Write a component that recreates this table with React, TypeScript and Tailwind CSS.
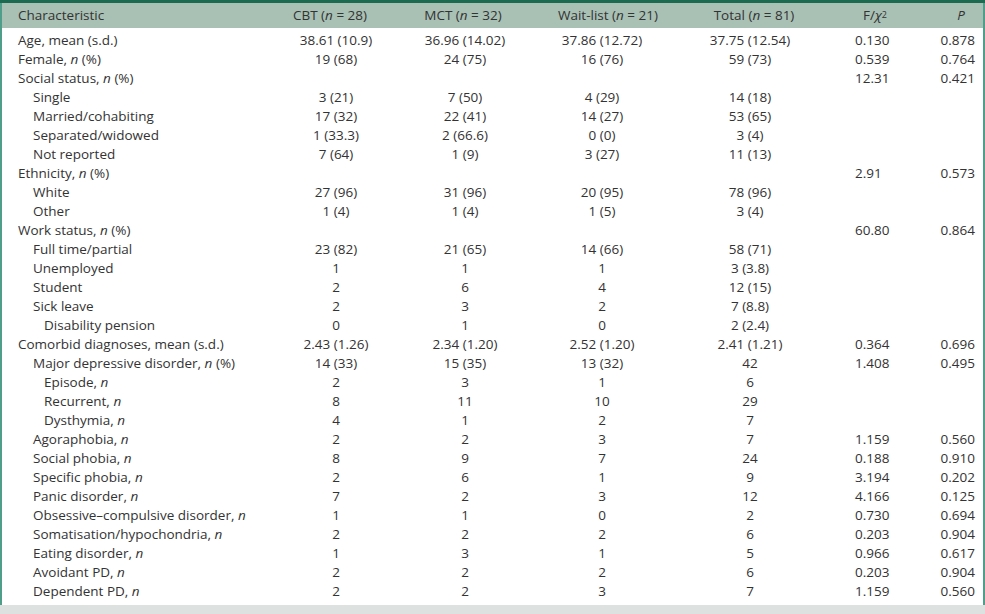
type Row = {
  label: string;
  level: 0 | 1 | 2;
  cbt?: string;
  mct?: string;
  wait?: string;
  total?: string;
  f?: string;
  p?: string;
};

const rows: Row[] = [
  { label: "Age, mean (s.d.)", level: 0, cbt: "38.61 (10.9)", mct: "36.96 (14.02)", wait: "37.86 (12.72)", total: "37.75 (12.54)", f: "0.130", p: "0.878" },
  { label: "Female, {n} (%)", level: 0, cbt: "19 (68)", mct: "24 (75)", wait: "16 (76)", total: "59 (73)", f: "0.539", p: "0.764" },
  { label: "Social status, {n} (%)", level: 0, f: "12.31", p: "0.421" },
  { label: "Single", level: 1, cbt: "3 (21)", mct: "7 (50)", wait: "4 (29)", total: "14 (18)" },
  { label: "Married/cohabiting", level: 1, cbt: "17 (32)", mct: "22 (41)", wait: "14 (27)", total: "53 (65)" },
  { label: "Separated/widowed", level: 1, cbt: "1 (33.3)", mct: "2 (66.6)", wait: "0 (0)", total: "3 (4)" },
  { label: "Not reported", level: 1, cbt: "7 (64)", mct: "1 (9)", wait: "3 (27)", total: "11 (13)" },
  { label: "Ethnicity, {n} (%)", level: 0, f: "2.91", p: "0.573" },
  { label: "White", level: 1, cbt: "27 (96)", mct: "31 (96)", wait: "20 (95)", total: "78 (96)" },
  { label: "Other", level: 1, cbt: "1 (4)", mct: "1 (4)", wait: "1 (5)", total: "3 (4)" },
  { label: "Work status, {n} (%)", level: 0, f: "60.80", p: "0.864" },
  { label: "Full time/partial", level: 1, cbt: "23 (82)", mct: "21 (65)", wait: "14 (66)", total: "58 (71)" },
  { label: "Unemployed", level: 1, cbt: "1", mct: "1", wait: "1", total: "3 (3.8)" },
  { label: "Student", level: 1, cbt: "2", mct: "6", wait: "4", total: "12 (15)" },
  { label: "Sick leave", level: 1, cbt: "2", mct: "3", wait: "2", total: "7 (8.8)" },
  { label: "Disability pension", level: 2, cbt: "0", mct: "1", wait: "0", total: "2 (2.4)" },
  { label: "Comorbid diagnoses, mean (s.d.)", level: 0, cbt: "2.43 (1.26)", mct: "2.34 (1.20)", wait: "2.52 (1.20)", total: "2.41 (1.21)", f: "0.364", p: "0.696" },
  { label: "Major depressive disorder, {n} (%)", level: 1, cbt: "14 (33)", mct: "15 (35)", wait: "13 (32)", total: "42", f: "1.408", p: "0.495" },
  { label: "Episode, {n}", level: 2, cbt: "2", mct: "3", wait: "1", total: "6" },
  { label: "Recurrent, {n}", level: 2, cbt: "8", mct: "11", wait: "10", total: "29" },
  { label: "Dysthymia, {n}", level: 2, cbt: "4", mct: "1", wait: "2", total: "7" },
  { label: "Agoraphobia, {n}", level: 1, cbt: "2", mct: "2", wait: "3", total: "7", f: "1.159", p: "0.560" },
  { label: "Social phobia, {n}", level: 1, cbt: "8", mct: "9", wait: "7", total: "24", f: "0.188", p: "0.910" },
  { label: "Specific phobia, {n}", level: 1, cbt: "2", mct: "6", wait: "1", total: "9", f: "3.194", p: "0.202" },
  { label: "Panic disorder, {n}", level: 1, cbt: "7", mct: "2", wait: "3", total: "12", f: "4.166", p: "0.125" },
  { label: "Obsessive\u2013compulsive disorder, {n}", level: 1, cbt: "1", mct: "1", wait: "0", total: "2", f: "0.730", p: "0.694" },
  { label: "Somatisation/hypochondria, {n}", level: 1, cbt: "2", mct: "2", wait: "2", total: "6", f: "0.203", p: "0.904" },
  { label: "Eating disorder, {n}", level: 1, cbt: "1", mct: "3", wait: "1", total: "5", f: "0.966", p: "0.617" },
  { label: "Avoidant PD, {n}", level: 1, cbt: "2", mct: "2", wait: "2", total: "6", f: "0.203", p: "0.904" },
  { label: "Dependent PD, {n}", level: 1, cbt: "2", mct: "2", wait: "3", total: "7", f: "1.159", p: "0.560" },
];

const cols = "grid grid-cols-[270px_128px_130px_144px_152px_99px_58px]";
const indent = ["pl-[16px]", "pl-[31px]", "pl-[42px]"];

// labels carry "{n}" where an italic n goes
function Label({ text }: { text: string }) {
  const parts = text.split("{n}");
  return (
    <>
      {parts.map((part, i) => (
        <span key={i}>
          {i > 0 && <i>n</i>}
          {part}
        </span>
      ))}
    </>
  );
}

function N() {
  return <i>n</i>;
}

export default function App() {
  return (
    <div className="w-[985px] h-[614px] bg-white flex flex-col text-[13.5px] text-[#333] font-['Open_Sans',sans-serif] leading-none">
      <div className="h-[3px] bg-[#1c6a4f]" />
      <div className="flex-1 flex flex-col border-x-2 border-[#4f9e8a]">
        <div className={`${cols} h-[25px] items-center bg-[#a9c0b4] whitespace-nowrap`}>
          <div className="pl-[16px]">Characteristic</div>
          <div className="text-center pr-[12px]">
            CBT (<N /> = 28)
          </div>
          <div className="text-center pr-[4px]">
            MCT (<N /> = 32)
          </div>
          <div className="text-center pl-[12px]">
            Wait-list (<N /> = 21)
          </div>
          <div className="text-center pl-[8px]">
            Total (<N /> = 81)
          </div>
          <div className="pl-[37px]">
            F/<i>χ</i>
            <sup className="text-[9px] relative -top-[2px]">2</sup>
          </div>
          <div className="text-right pr-[18px]">
            <i>P</i>
          </div>
        </div>
        <div className="pt-[3px] flex flex-col">
          {rows.map((r) => (
            <div key={r.label} className={`${cols} h-[19px] items-center whitespace-nowrap`}>
              <div className={indent[r.level]}>
                <Label text={r.label} />
              </div>
              <div className="text-center">{r.cbt}</div>
              <div className="text-center">{r.mct}</div>
              <div className="text-center">{r.wait}</div>
              <div className="text-center">{r.total}</div>
              <div className="pl-[29px]">{r.f}</div>
              <div className="text-right pr-[8px]">{r.p}</div>
            </div>
          ))}
        </div>
      </div>
      <div className="h-[9px] bg-[#dde1df]" />
    </div>
  );
}
